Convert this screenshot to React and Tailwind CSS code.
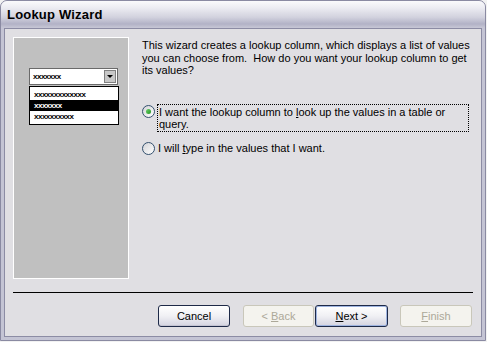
import React from "react";

const font = { fontFamily: '"Liberation Sans", Arial, sans-serif' };

const Xs = ({ n, className = "" }) => (
  <span className={`text-[8px] font-bold leading-none tracking-[-0.5px] ${className}`}>
    {"x".repeat(n)}
  </span>
);

const Radio = ({ checked }) => (
  <span className="relative w-[13px] h-[13px] shrink-0 rounded-full border border-[#33506e] bg-gradient-to-br from-[#d4d4d8] to-white flex items-center justify-center">
    {checked && <span className="w-[5px] h-[5px] rounded-full bg-gradient-to-br from-[#6ad06a] to-[#1d961d]" />}
  </span>
);

const Button = ({ children, disabled, primary, className = "" }) => {
  if (disabled) {
    return (
      <div className={`h-[22px] rounded-[3px] border border-[#c9c7ba] bg-[#f4f3ee] text-[#aca899] flex items-center justify-center text-[11px] ${className}`}>
        {children}
      </div>
    );
  }
  return (
    <div
      className={`h-[22px] rounded-[3px] border border-[#1e2a48] bg-gradient-to-b from-white via-[#f0f0f4] to-[#d4d4e0] text-black flex items-center justify-center text-[11px] ${
        primary ? "shadow-[inset_0_0_0_1px_#9fb4e0]" : "shadow-[inset_0_-1px_0_#c4c4d2]"
      } ${className}`}
    >
      {children}
    </div>
  );
};

export default function App() {
  return (
    <div className="w-[487px] h-[342px] bg-[#f2f2f2]" style={font}>
      <div className="w-[486px] h-[341px] flex flex-col rounded-t-[7px] border border-[#8a8aa2] bg-[#c4c4d4] overflow-hidden">
        {/* Title bar */}
        <div className="h-[27px] shrink-0 flex items-center pl-[6px] bg-[linear-gradient(to_bottom,#fafafc_0%,#ececf2_25%,#d2d2de_60%,#b2b2c6_85%,#c8c8d6_100%)]">
          <span className="text-[13px] font-bold text-black tracking-[0.2px]">Lookup Wizard</span>
        </div>

        {/* Client */}
        <div className="flex-1 px-[3px] pb-[3px] flex flex-col">
          <div className="flex-1 border border-[#8c8ca4] bg-[#e0dfe3] flex flex-col pl-[8px] pr-[8px] pt-[8px]">
            <div className="flex">
              {/* Left picture */}
              <div className="w-[116px] h-[242px] shrink-0 bg-[#c0c0c0] border border-white pt-[30px] pl-[15px]">
                <div className="w-[89px] h-[17px] bg-white border border-[#6a6a6a] flex items-center justify-between pl-[3px] pr-px">
                  <Xs n={7} />
                  <div className="w-[12px] h-[13px] bg-[#c8c8c8] border border-[#808080] flex items-center justify-center">
                    <div className="w-0 h-0 border-l-[3px] border-r-[3px] border-t-[3px] border-l-transparent border-r-transparent border-t-black" />
                  </div>
                </div>
                <div className="mt-px w-[90px] bg-white border border-black py-[2px] flex flex-col">
                  <div className="h-[11px] pl-[4px] flex items-center"><Xs n={13} /></div>
                  <div className="h-[11px] pl-[4px] flex items-center bg-black text-white"><Xs n={7} /></div>
                  <div className="h-[11px] pl-[4px] flex items-center"><Xs n={10} /></div>
                </div>
              </div>

              {/* Text column */}
              <div className="ml-[13px] pt-[2px] text-[11px] leading-[12.5px] text-black">
                <div className="whitespace-nowrap">This wizard creates a lookup column, which displays a list of values</div>
                <div className="whitespace-nowrap">you can choose from.&nbsp; How do you want your lookup column to get</div>
                <div className="whitespace-nowrap">its values?</div>

                <div className="mt-[27px] flex items-start">
                  <div className="pt-[1px]">
                    <Radio checked />
                  </div>
                  <div className="ml-[2px] w-[312px] border border-dotted border-black pl-px pt-px pb-[1px] leading-[12px]">
                    <div>I want the lookup column to <span className="underline">l</span>ook up the values in a table or</div>
                    <div>query.</div>
                  </div>
                </div>

                <div className="mt-[10px] flex items-center">
                  <Radio />
                  <div className="ml-[3px]">I will <span className="underline">t</span>ype in the values that I want.</div>
                </div>
              </div>
            </div>

            <div className="mt-[13px] h-px bg-black" />

            <div className="mt-[12px] flex pl-[145px]">
              <Button className="w-[72px]">Cancel</Button>
              <Button disabled className="w-[71px] ml-[13px]">
                {"< "}
                <span className="underline ml-[3px]">B</span>ack
              </Button>
              <Button primary className="w-[73px] ml-[1px]"><span className="underline">N</span>ext &gt;</Button>
              <Button disabled className="w-[72px] ml-[12px]"><span className="underline">F</span>inish</Button>
            </div>
          </div>
        </div>
      </div>
    </div>
  );
}
